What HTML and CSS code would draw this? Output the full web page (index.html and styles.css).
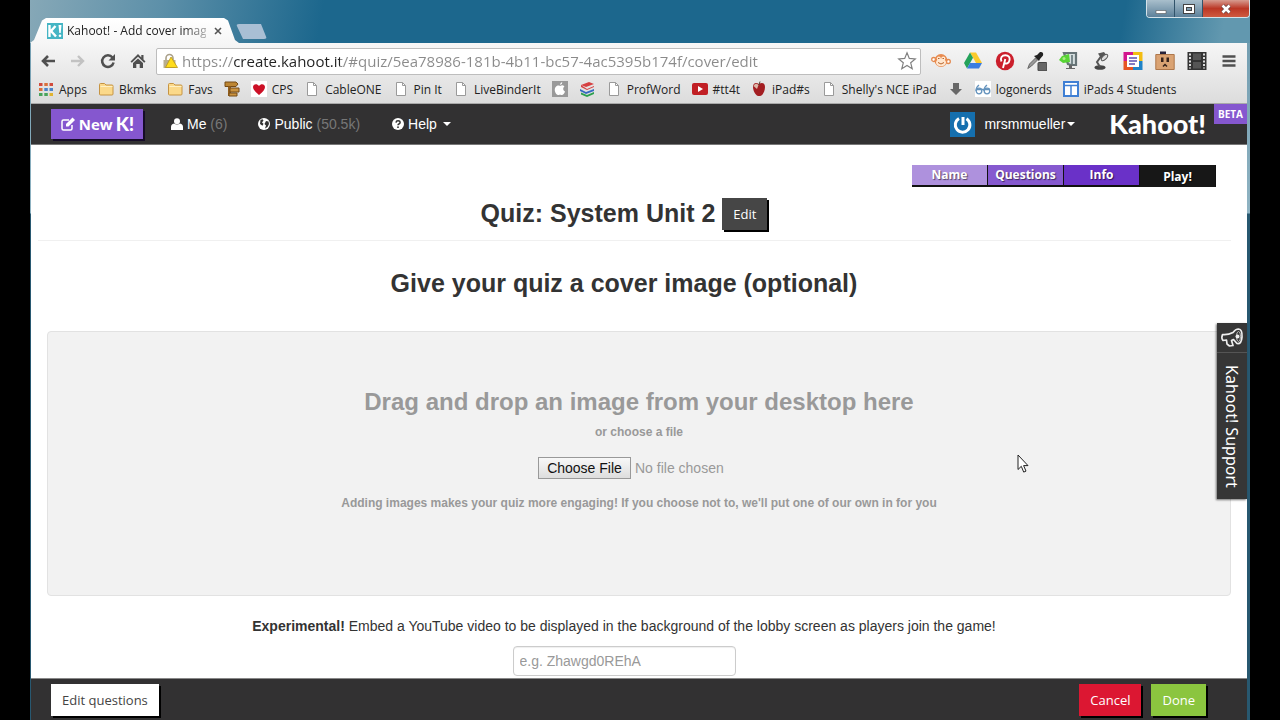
FILE: index.html
```html
<!DOCTYPE html>
<html lang="en">
<head>
<meta charset="utf-8">
<title>Kahoot! - Add cover image</title>
<link rel="stylesheet" href="styles.css">
</head>
<body>
<svg class="defs" aria-hidden="true">
  <symbol id="doc" viewBox="0 0 16 16"><path d="M3.5 1.5h6l3 3v10h-9z" fill="#fff" stroke="#9a9a9a"/><path d="M9.500 1.500v3h3" fill="none" stroke="#9a9a9a"/></symbol>
  <symbol id="folder" viewBox="0 0 16 16"><path d="M1.500 13V3.500q0-1 1-1h4l1.500 1.500H14q1 0 1 1V13q0 1-1 1H2.500q-1 0-1-1z" fill="#fbd98a" stroke="#c69443"/><path d="M2.500 5.500h12" stroke="#fff0c4"/></symbol>
</svg>
<div class="window">
  <header class="titlebar">
    <div class="tab">
      <svg class="ico" viewBox="0 0 16 16"><path d="M0 0h16v16H0z" fill="#45b5c4"/><path d="M2.500 2v12M8.500 3L4 8l5 5.500" stroke="#fff" stroke-width="2.400" fill="none"/><path d="M11.500 2h3l-.8 8h-1.400z" fill="#fff"/><circle cx="13" cy="12.700" r="1.300" fill="#fff"/></svg>
      <span class="tab-title">Kahoot! - Add cover imag</span>
      <button class="tab-close" aria-label="Close tab"><svg width="8" height="8" viewBox="0 0 8 8"><path d="M1 1l6 6M7 1L1 7" stroke="#555" stroke-width="1.600"/></svg></button>
    </div>
    <button class="new-tab" aria-label="New tab"></button>
    <div class="controls">
      <button aria-label="Minimize"><svg width="14" height="12" viewBox="0 0 14 12"><path d="M2 7.500h10v3H2z" fill="#fff" stroke="#555" stroke-width=".6"/></svg></button>
      <button aria-label="Maximize"><svg width="14" height="12" viewBox="0 0 14 12"><path d="M3 3h8v6H3z" fill="none" stroke="#444" stroke-width="4"/><path d="M3 3h8v6H3z" fill="none" stroke="#fff" stroke-width="2"/></svg></button>
      <button class="close" aria-label="Close"><svg width="14" height="12" viewBox="0 0 14 12"><path d="M3.500 2.500l7 7M10.500 2.500l-7 7" stroke="#644" stroke-width="4"/><path d="M3.500 2.500l7 7M10.500 2.500l-7 7" stroke="#fff" stroke-width="2.600"/></svg></button>
    </div>
  </header>

  <div class="chrome">
    <div class="toolbar">
      <div class="nav-buttons">
        <button aria-label="Back"><svg class="ico" viewBox="0 0 16 16"><path d="M15 8H3M8 3L3 8l5 5" fill="none" stroke="#505050" stroke-width="2.600"/></svg></button>
        <button aria-label="Forward"><svg class="ico" viewBox="0 0 16 16"><path d="M1 8h12M8 3l5 5-5 5" fill="none" stroke="#c2c2c2" stroke-width="2.400"/></svg></button>
        <button aria-label="Reload"><svg class="ico" viewBox="0 0 16 16"><path d="M12.500 4.500A5.800 5.800 0 1 0 13.600 9.500" fill="none" stroke="#505050" stroke-width="2.500"/><path d="M15 1v6.500H8.500z" fill="#505050"/></svg></button>
        <button aria-label="Home"><svg class="ico" viewBox="0 0 16 16"><path d="M8 1L.5 8.500l1.300 1.200L8 3.800l6.200 5.900 1.300-1.200-2-2V2h-2.200v2.400z" fill="#505050"/><path d="M3 10l5-4.600L13 10v5H9.700v-4H6.300v4H3z" fill="#505050"/></svg></button>
      </div>
      <div class="omnibox">
        <svg class="ico" viewBox="0 0 16 16"><path d="M4 7V5a3.500 3.500 0 0 1 7 0v2" fill="none" stroke="#aaa08a" stroke-width="1.600"/><path d="M1.500 7h12v8h-12z" fill="#b9ae8e"/><path d="M9 4l6.500 10.500h-12z" fill="#ffdc1c" stroke="#b89615" stroke-width=".8"/></svg>
        <input class="url" type="text" aria-label="Address" value="https://create.kahoot.it/#quiz/5ea78986-181b-4b11-bc57-4ac5395b174f/cover/edit">
        <button aria-label="Bookmark this page"><svg width="20" height="20" viewBox="0 0 20 20"><path d="M10 1.800l2.300 5.600 6 .5-4.600 3.900 1.500 5.900-5.200-3.200-5.200 3.200 1.500-5.900L1.700 7.900l6-.5z" fill="#fff" stroke="#808080" stroke-width="1.200"/></svg></button>
      </div>
      <div class="extensions">
        <button aria-label="Monkey"><svg viewBox="0 0 20 20"><circle cx="2.700" cy="8.500" r="2" fill="#fff" stroke="#e38a50" stroke-width="1.300"/><circle cx="17.300" cy="10.500" r="2" fill="#fff" stroke="#e38a50" stroke-width="1.300"/><circle cx="10" cy="9.500" r="6.500" fill="#e88b50"/><ellipse cx="10" cy="11.500" rx="5" ry="3.800" fill="#ffe7d0"/><circle cx="7.800" cy="7.500" r="2" fill="#ffe7d0"/><circle cx="12.300" cy="7.500" r="2" fill="#ffe7d0"/><path d="M7 7.500h1.500M11.500 7.500H13M7 11.500q3 3 6 0" stroke="#b5642c" fill="none"/></svg></button>
        <button aria-label="Drive"><svg viewBox="0 0 20 20"><path d="M7 1.500h6L19 12h-6z" fill="#fbca2b"/><path d="M7 1.500l3 5.300-6 10.700-3-5.500z" fill="#24a25b"/><path d="M4 17.500l3-5.500h12l-3 5.500z" fill="#3b7de0"/></svg></button>
        <button aria-label="Pinterest"><svg viewBox="0 0 20 20"><circle cx="10" cy="10" r="9.200" fill="#cb1f2c"/><path d="M8 17l2.300-9M6.500 10.500C4.800 7 7 4.300 10.400 4.300c3.200 0 4.600 2 4.200 4.600-.5 3.500-4 4.700-5.200 2.600" fill="none" stroke="#fff" stroke-width="1.900"/></svg></button>
        <button aria-label="Eyedropper"><svg viewBox="0 0 20 20"><path d="M.8 17.500l1.700-4.500 6-6 2 2-6 6z" fill="#999" stroke="#666"/><path d="M7 5l5 5 1-2 3-3.500q1-4-3-3.500l-3 3z" fill="#222"/><rect x="11" y="11.500" width="9" height="8.500" rx="1" fill="#666" stroke="#444"/></svg></button>
        <button aria-label="Archive"><svg viewBox="0 0 20 20"><path d="M5 2h12v12h-5l-3-1z" fill="#d5dedf" stroke="#667376" stroke-width="2.200"/><path d="M13 4v9" stroke="#78888b" stroke-width="2"/><path d="M3 5l7-2 1 8-7 1-4-3z" fill="#58d434"/><circle cx="5" cy="7.500" r="1.500" fill="#a9ec85"/><path d="M10 14h3v3h3v1H7v-1h3z" fill="#666"/></svg></button>
        <button aria-label="Lamp"><svg viewBox="0 0 20 20"><ellipse cx="9" cy="16.500" rx="5.500" ry="2.300" fill="#454545"/><path d="M9 16l-3-5 5-7" stroke="#555" stroke-width="2" fill="none"/><path d="M7 2.500l6-1.500 3 4-5 4z" fill="#555"/><ellipse cx="13.500" cy="6.500" rx="4" ry="2" transform="rotate(-45 13.500 6.500)" fill="#ddd" stroke="#555"/></svg></button>
        <button aria-label="Reader"><svg viewBox="0 0 20 20"><path d="M.5 1H10v4H5v5H.5z" fill="#d2168e"/><path d="M10 1h9.500v9H15V5h-5z" fill="#f3bd12"/><path d="M19.500 10v9H10v-4h5v-5z" fill="#2083c7"/><path d="M10 19H.5v-9H5v5h5z" fill="#e65423"/><path d="M4 4h12v12H4z" fill="#fff"/><path d="M6 7h8M6 10h8M6 13h6" stroke="#5950b0" stroke-width="1.500"/></svg></button>
        <button aria-label="Box face"><svg viewBox="0 0 20 20"><path d="M5 .5h6v4H5z" fill="#26233b"/><path d="M.8 3.500h18.400v15H.8z" fill="#daa373" stroke="#ae774b"/><path d="M6 6.500h2.500v4.500H6zM11.500 6.500H14v4.500h-2.500z" fill="#35221b"/><path d="M8 15.500l2-2 2 2" stroke="#35221b" stroke-width="1.500" fill="none"/></svg></button>
        <button aria-label="Film"><svg viewBox="0 0 20 20"><path d="M.5 1h19v18H.5z" fill="#333"/><path d="M3 2.500v15M17 2.500v15" stroke="#ddd" stroke-width="2" stroke-dasharray="2 1.500"/><path d="M6 2.500h8v6.500H6zM6 11h8v6.500H6z" fill="#555"/></svg></button>
        <button aria-label="Menu"><svg viewBox="0 0 20 20"><path d="M3.500 5.500h13M3.500 10h13M3.500 14.500h13" stroke="#505050" stroke-width="2.700"/></svg></button>
      </div>
    </div>
    <nav class="bookmarks" aria-label="Bookmarks">
      <a href="#"><svg class="ico" viewBox="0 0 16 16"><path d="M1 2h3.500v3H1zM11.500 2H15v3h-3.500z" fill="#d14b3d"/><path d="M6.300 2h3.500v3H6.300zM1 7h3.500v3H1z" fill="#d9703b"/><path d="M6.300 7h3.500v3H6.300zM11.500 7H15v3h-3.500z" fill="#4b83c9"/><path d="M1 12h3.500v3H1zM6.300 12h3.500v3H6.300z" fill="#49a35b"/><path d="M11.500 12H15v3h-3.500z" fill="#e0b331"/></svg>Apps</a>
      <a href="#"><svg class="ico"><use href="#folder"/></svg>Bkmks</a>
      <a href="#"><svg class="ico"><use href="#folder"/></svg>Favs</a>
      <a href="#" aria-label="Signpost"><svg class="ico" viewBox="0 0 16 16"><path d="M1 1h11l2 2-2 2.500H1z" fill="#bd8633" stroke="#754a16"/><path d="M4 5.500h3V15H4z" fill="#94601e"/><path d="M6 7h9v4H6zM5 12h8v3H5z" fill="#cc9440" stroke="#754a16"/></svg></a>
      <a href="#"><svg class="ico" viewBox="0 0 16 16"><path d="M0 0h16v16H0z" fill="#fff"/><path d="M8 14C4 10.500 2 8.500 2 6c0-3 4-4 6-1 2-3 6-2 6 1 0 2.500-2 4.500-6 8z" fill="#cc1026"/></svg>CPS</a>
      <a href="#"><svg class="ico"><use href="#doc"/></svg>CableONE</a>
      <a href="#"><svg class="ico"><use href="#doc"/></svg>Pin It</a>
      <a href="#"><svg class="ico"><use href="#doc"/></svg>LiveBinderIt</a>
      <a href="#" aria-label="Apple"><svg class="ico" viewBox="0 0 16 16"><path d="M0 0h16v16H0z" fill="#999"/><path d="M8 5c2-1 3-1 4.500.5-2 1.500-1.500 4 .5 5-1 3-2.500 4.500-5 3-2.500 1.500-4 0-5-3-1-4 2-7 5-5.500z" fill="#fff"/><path d="M8 4q0-2.500 2.300-3Q10.500 3.500 8 4z" fill="#fff"/></svg></a>
      <a href="#" aria-label="Books"><svg class="ico" viewBox="0 0 16 16"><path d="M2 4l8-3 5 2-8 3zM2 4v2l6 3 7-3V5L8 8z" fill="#d64042"/><path d="M1 8l6 3 8-3v2l-8 3-6-3z" fill="#3769c2"/><path d="M2 11.500l6 2.500 7-3v2L8 16l-6-2.500z" fill="#2ca04e"/></svg></a>
      <a href="#"><svg class="ico"><use href="#doc"/></svg>ProfWord</a>
      <a href="#"><svg class="ico" viewBox="0 0 16 16"><rect y="2" width="16" height="12" rx="2" fill="#c11f24"/><path d="M6 5l5 3-5 3z" fill="#fff"/></svg>#tt4t</a>
      <a href="#"><svg class="ico" viewBox="0 0 16 16"><path d="M8 3c3-2 6-1 6 3 0 5-3 9-5 9H7C4 14 2 9 2 6c0-4 3-5 6-3z" fill="#a31e22"/><path d="M2.500 5q2-4 5-1L6 8z" fill="#ddb7a8"/><path d="M8 4l1-3.500" stroke="#543"/></svg>iPad#s</a>
      <a href="#"><svg class="ico"><use href="#doc"/></svg>Shelly's NCE iPad</a>
      <a href="#" aria-label="Download"><svg class="ico" viewBox="0 0 16 16"><path d="M5 2h6v6h3l-6 6-6-6h3z" fill="#686868"/></svg></a>
      <a href="#"><svg class="ico" viewBox="0 0 16 16"><path d="M0 0h16v16H0z" fill="#fff"/><g fill="none" stroke="#6593bd" stroke-width="1.300"><circle cx="4" cy="10" r="2.800"/><circle cx="12" cy="10" r="2.800"/><path d="M1 10q0-4 3-6M9 10q0-4 3-6M1 8.500h14"/></g></svg>logonerds</a>
      <a href="#"><svg class="ico" viewBox="0 0 16 16"><path d="M1 1h14v14H1z" fill="#fff" stroke="#3f7fd4" stroke-width="2"/><path d="M1 4.500h14M8 5v10" stroke="#3f7fd4" stroke-width="1.500"/></svg>iPads 4 Students</a>
    </nav>
  </div>

  <div class="page">
    <nav class="appbar">
      <button class="new-k"><svg width="16" height="16" viewBox="0 0 16 16"><path d="M12 9v3.500q0 1.500-1.500 1.500h-7Q2 14 2 12.500v-7Q2 4 3.500 4H9" fill="none" stroke="#fff" stroke-width="1.500"/><path d="M6 8l6.500-6.500 2.500 2.500-6.500 6.500H6z" fill="#fff"/></svg><span>New</span><span class="k">K!</span></button>
      <a class="me" href="#"><svg width="12" height="12" viewBox="0 0 12 12"><circle cx="6" cy="3.200" r="3" fill="#fff"/><path d="M0 12V9q0-3 3-3.500 3 2 6 0 3 .5 3 3.500v3z" fill="#fff"/></svg><span>Me <i>(6)</i></span></a>
      <a class="public" href="#"><svg width="12" height="12" viewBox="0 0 12 12"><circle cx="6" cy="6" r="6" fill="#fff"/><path d="M2.500 2l2-.8 1 1.300-1.500 2 1.500 1.300-1 2L2 6zM8 3l2.500.5L11 6 9.500 9 7 10.500 8 7.500 6.500 6z" fill="#333"/></svg><span>Public <i>(50.5k)</i></span></a>
      <a class="help" href="#"><svg width="12" height="12" viewBox="0 0 12 12"><circle cx="6" cy="6" r="6" fill="#fff"/><path d="M4 4.600q.2-1.800 2-1.800 2.100 0 2.100 1.700 0 1-1.200 1.500-.9.400-.9 1.200" fill="none" stroke="#333" stroke-width="1.500"/><circle cx="6" cy="9.200" r=".9" fill="#333"/></svg><span>Help</span><b class="caret"></b></a>
      <a class="user" href="#"><svg width="25" height="25" viewBox="0 0 25 25"><path d="M0 0h25v25H0z" fill="#156fae"/><path d="M9 6.500A7.300 7.300 0 1 0 16.500 6.700" fill="none" stroke="#fff" stroke-width="3"/><path d="M13 5v8" stroke="#fff" stroke-width="3"/></svg><span>mrsmmueller</span><b class="caret"></b></a>
      <a class="logo" href="#">Kahoot!</a>
      <span class="beta">BETA</span>
    </nav>

    <main class="content">
      <nav class="steps">
        <a class="s1" href="#">Name</a><a class="s2" href="#">Questions</a><a class="s3" href="#">Info</a><a class="s4" href="#">Play!</a>
      </nav>
      <div class="quiz-head">
        <h1>Quiz: System Unit 2</h1>
        <button class="btn dark">Edit</button>
      </div>
      <h2>Give your quiz a cover image (optional)</h2>
      <section class="dropzone">
        <h3>Drag and drop an image from your desktop here</h3>
        <label for="cover">or choose a file</label>
        <input id="cover" type="file">
        <p>Adding images makes your quiz more engaging! If you choose not to, we'll put one of our own in for you</p>
      </section>
      <div class="video">
        <label for="yt"><b>Experimental!</b> Embed a YouTube video to be displayed in the background of the lobby screen as players join the game!</label>
        <input id="yt" type="text" placeholder="e.g. Zhawgd0REhA">
      </div>
    </main>

    <footer class="actions">
      <button class="btn white">Edit questions</button>
      <button class="btn red">Cancel</button>
      <button class="btn green">Done</button>
    </footer>
    <button class="support">
      <svg width="24" height="24" viewBox="0 0 24 24"><path d="M2.500 8.500Q1 12 3 14.500l3.500-.5.500 4 2.500 2 3.500-.5-1.500-5 2-1 3.500 4q4.500 1 5-6.500T18.500 3q-3 0-5.500 3.500Q8 9 2.500 8.500z" fill="none" stroke="#eee" stroke-width="1.700" stroke-linejoin="round"/><ellipse cx="18.500" cy="10.500" rx="2" ry="5" fill="none" stroke="#bbb"/><circle cx="17.500" cy="10.500" r="2" fill="#eee"/></svg>
      <span>Kahoot! Support</span>
    </button>
  </div>
</div>
<svg class="cursor" width="12" height="20" viewBox="0 0 12 20" aria-hidden="true"><path d="M1 1v14.500l3.300-3.200 2.400 5.800 2.300-1-2.400-5.500H11z" fill="#fff" stroke="#222"/></svg>
</body>
</html>
```

FILE: styles.css
```css
* { box-sizing: border-box; }
body { margin: 0; padding: 0 30px; background: #000; font-family: "Liberation Sans", Arial, sans-serif; font-size: 14px; color: #333; overflow: hidden; }
button { border: 0; padding: 0; margin: 0; background: none; font: inherit; color: inherit; }
a { color: inherit; text-decoration: none; }
h1, h2, h3, p { margin: 0; }
svg { display: block; flex: none; }
.defs { position: absolute; width: 0; height: 0; }
.ico { width: 16px; height: 16px; }

.window { display: flex; flex-direction: column; height: 100vh; background: linear-gradient(#6d99ad 0, #8fb3c2 213px, #285870 214px); padding-right: 3px; padding-left: 1px; }

.titlebar { display: flex; height: 43px; align-items: flex-end; margin: 0 -3px 0 -1px; background: linear-gradient(100deg, #86a8b7 0, #5d90a9 130px, #1c678d 290px, #1c678d 1080px, #6298af 1180px); }
.tab { display: flex; align-items: center; width: 209px; height: 25px; padding-left: 17px; background: linear-gradient(#fff, #f6f6f6); clip-path: polygon(0 100%, 4px 88%, 12px 10%, 16px 0, 194px 0, 198px 10%, 205px 88%, 209px 100%); font: 12px "Open Sans", sans-serif; color: #222; }
.tab-title { width: 139px; margin: 0 8px 0 4px; white-space: nowrap; overflow: hidden; mask-image: linear-gradient(90deg, #000 115px, #0005 139px); }
.new-tab { width: 31px; height: 15px; margin: 0 0 4px -3px; background: #a9bfd4; border-radius: 3px; clip-path: polygon(0 0, 25px 0, 100% 100%, 7px 100%); }
.controls { display: flex; align-self: flex-start; margin-left: auto; height: 18px; border: solid #d5e3ea; border-width: 0 1px 1px; border-radius: 0 0 4px 4px; overflow: hidden; }
.controls button { display: flex; align-items: center; justify-content: center; width: 28px; background: linear-gradient(#a9bfcc, #5d819a); border-right: 1px solid #31536a; }
.controls .close { width: 46px; border: 0; background: linear-gradient(#d79c90, #bb3725 50%, #cf5a40); }

.chrome { background: linear-gradient(#f6f6f6, #dcdcdc); border-bottom: 1px solid #a9a9a9; }
.toolbar { display: flex; align-items: center; height: 36px; padding: 0 8px 0 9px; }
.nav-buttons { display: flex; gap: 14px; margin-right: 10px; }
.omnibox { display: flex; flex: 1; min-width: 0; align-items: center; height: 27px; padding: 0 3px 0 5px; gap: 4px; background: #fff; border: 1px solid #bdbdbd; border-radius: 2px; }
.url { flex: 1; min-width: 0; border: 0; padding: 0; font: 15px "Open Sans", sans-serif; color: transparent; background: linear-gradient(90deg, #8a8a8a 51px, #222 51px 158px, #8a8a8a 158px); background-clip: text; -webkit-background-clip: text; }
.extensions { display: flex; gap: 12px; margin-left: 10px; }
.extensions svg { width: 20px; height: 20px; }
.bookmarks { display: flex; gap: 11px; height: 24px; align-items: center; padding: 0 7px 4px; font: 12px "Open Sans", sans-serif; color: #222; white-space: nowrap; overflow: hidden; }
.bookmarks a { display: flex; align-items: center; gap: 5px; }

.page { position: relative; display: flex; flex: 1; min-height: 0; flex-direction: column; background: #fff; }
.appbar { position: relative; display: flex; align-items: center; height: 41px; padding: 0 41px 0 20px; background: #323132; border-bottom: 1px solid #777; color: #fff; flex: none; }
.appbar a { display: flex; align-items: center; gap: 4px; }
.appbar i { font-style: normal; color: #777; }
.new-k { display: flex; align-items: center; justify-content: center; gap: 3px; width: 92px; height: 30px; background: #8557cf; box-shadow: 2px 2px 0 #160c28; font: bold 15px/20px "Open Sans", sans-serif; color: #fff; }
.new-k .k { font: 900 19px/20px Lato, sans-serif; }
.me { margin-left: 28px; }
.public { margin-left: 31px; }
.help { margin-left: 32px; }
.caret { border: 4px solid transparent; border-top-color: currentColor; border-bottom: 0; margin-left: 2px; }
.user { margin-left: auto; }
.user span { margin-left: 5px; }
.user .caret { margin-left: -2px; }
.appbar .logo { margin-left: 34px; font: 900 27px/36px Lato, sans-serif; }
.beta { position: absolute; top: 0; right: 0; width: 33px; line-height: 20px; background: #8557cf; font-family: "Open Sans", sans-serif; font-size: 10px; font-weight: bold; text-align: center; }

.content { flex: 1; min-height: 0; overflow: hidden; padding: 20px 16px 0; text-align: center; }
.steps { display: flex; justify-content: flex-end; padding-right: 15px; font: bold 12px/20px "Open Sans", sans-serif; color: #fff; text-shadow: 1px 1px 1px #0008; }
.steps a { width: 76px; border-bottom: 2px solid #111; border-right: 1px solid #111; }
.s1 { background: #ae91dd; }
.s2 { background: #8659cf; }
.s3 { background: #6a31c8; }
.steps .s4 { background: #171717; padding-top: 2px; border-bottom: 0; }
.quiz-head { display: flex; align-items: flex-start; justify-content: center; gap: 7px; margin: 11px 0 0 -9px; padding: 0 21px 10px 0; border-bottom: 1px solid #f0f0f0; }
h1, h2, h3 { font-size: 25px; line-height: 30px; font-weight: bold; }
h2 { margin: 27px 30px 33px 0; }
h3 { font-size: 24px; }
.btn { height: 32px; padding: 0 11px; font: 13px "Open Sans", sans-serif; box-shadow: 2px 2px 0 #000; }
.dark { background: #464646; color: #fff; }
.white { background: #fff; color: #444; }
.red { background: #dc1732; color: #fff; margin-left: auto; }
.green { background: #8bc53f; color: #fff; }
.dropzone { display: flex; flex-direction: column; align-items: center; padding: 55px 20px 84px; background: #f2f2f2; border: 1px solid #e2e2e2; border-radius: 4px; color: #999; }
.dropzone label, .dropzone p { font-size: 12px; line-height: 16px; font-weight: bold; }
.dropzone label { margin: 7px 0 17px; }
.dropzone input { width: 202px; height: 22px; margin-bottom: 16px; font: 14px "Liberation Sans", Arial, sans-serif; color: #999; }
.dropzone input::file-selector-button { height: 22px; width: 93px; padding: 0; border: 1px solid #999; border-radius: 0; background: linear-gradient(#f8f8f8, #ddd); font: 14px "Liberation Sans", Arial, sans-serif; color: #111; margin-right: 4px; }
.video { display: flex; flex-direction: column; align-items: center; gap: 10px; margin: 20px 30px 0 0; line-height: 20px; }
.video input { width: 223px; height: 30px; padding: 0 6px; border: 1px solid #ccc; border-radius: 4px; font: 14px "Liberation Sans", Arial, sans-serif; box-shadow: inset 0 1px 1px #0001; }
.video input::placeholder { color: #999; }

.actions { display: flex; flex: none; gap: 10px; align-items: center; height: 42px; padding: 0 41px 0 20px; border-top: 1px solid #888; background: #323132; }
.support { position: absolute; right: 0; top: 219px; display: flex; flex-direction: column; align-items: center; width: 30px; height: 176px; background: #363636; box-shadow: -1px 1px 2px #0008; font: 16px "Noto Sans", sans-serif; color: #fff; }
.support svg { margin: 3px 0 2px; }
.support span { display: flex; flex: 1; align-items: center; justify-content: center; width: 100%; writing-mode: vertical-rl; border-top: 1px solid #555; white-space: nowrap; }
.cursor { position: absolute; left: 1017px; top: 454px; }
```
